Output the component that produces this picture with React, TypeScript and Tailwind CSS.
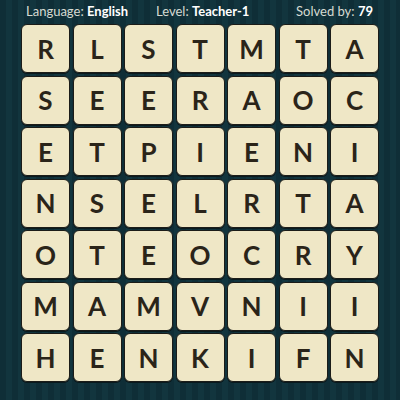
const rows = [
  "RLSTMTA",
  "SEERAOC",
  "ETPIENI",
  "NSELRTA",
  "OTEOCRY",
  "MAMVNII",
  "HENKIFN",
];

function Tile({ letter }: { letter: string }) {
  return (
    <div className="flex h-[49px] w-[49px] items-center justify-center rounded-[6px] border border-[#1b1c18] bg-[#efe7c6] text-[26px] font-bold leading-none text-[#2a2419] shadow-[0_1px_0_#0a1a1e]">
      {letter}
    </div>
  );
}

export default function App() {
  return (
    <div
      className="flex h-[400px] w-[400px] flex-col bg-[repeating-linear-gradient(90deg,#0f2e37_0px,#0f2e37_6px,#12353e_6px,#12353e_12px)] text-[#d6dad2]"
      style={{ fontFamily: "Lato, 'Open Sans', sans-serif" }}
    >
      <div className="flex h-[24px] items-center pl-[26px] pr-[27px] text-[13px]">
        <div className="w-[130px]">
          Language: <span className="font-bold text-white">English</span>
        </div>
        <div>
          Level: <span className="font-bold text-white">Teacher-1</span>
        </div>
        <div className="ml-auto">
          Solved by: <span className="font-bold text-white">79</span>
        </div>
      </div>
      <div className="ml-[21px] grid w-[358px] grid-cols-7 gap-[2.5px]">
        {rows.map((row, r) =>
          row.split("").map((ch, c) => <Tile key={`${r}-${c}`} letter={ch} />)
        )}
      </div>
    </div>
  );
}
